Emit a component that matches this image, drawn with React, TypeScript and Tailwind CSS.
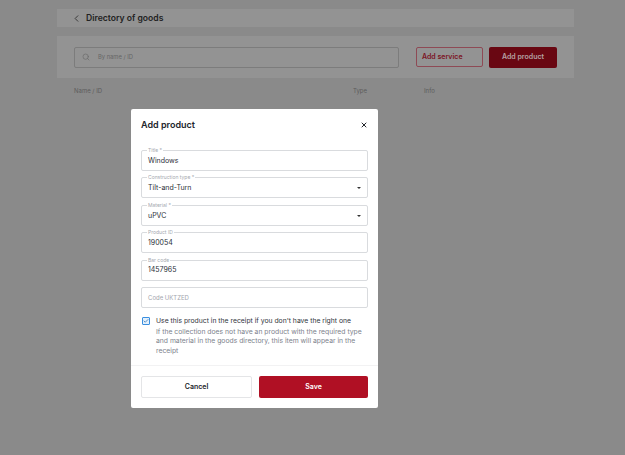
import { ChevronLeft, Search, X, Check } from "lucide-react";

const fields = [
  { label: "Title *", value: "Windows" },
  { label: "Construction type *", value: "Tilt-and-Turn", select: true },
  { label: "Material *", value: "uPVC", select: true },
  { label: "Product ID", value: "190054" },
  { label: "Bar code", value: "1457965" },
];

function Field({ label, value, select }: { label: string; value: string; select?: boolean }) {
  return (
    <div className="relative flex h-[21px] items-center justify-between rounded-[2px] border border-[#d9dbde] pl-[6px] pr-[6px] pt-[1px]">
      <span className="absolute -top-[4px] left-[5px] bg-white px-[1px] text-[5px] leading-[6px] text-[#a5a9b0]">
        {label}
      </span>
      <span className="text-[7px] text-[#2b2f38]">{value}</span>
      {select && <span className="h-0 w-0 border-x-[2px] border-t-[2.5px] border-x-transparent border-t-[#333]" />}
    </div>
  );
}

export default function App() {
  return (
    <div className="relative h-[455px] w-[625px] overflow-hidden bg-[#8a8a8a] font-['Inter','Liberation_Sans',sans-serif]">
      <div className="ml-[57px] flex w-[517px] flex-col pt-[9px]">
        <div className="flex h-[18px] items-center gap-[4px] bg-[#939393] pl-[14px] text-[8.6px] font-semibold text-[#222]">
          <ChevronLeft size={11} strokeWidth={2} className="text-[#333]" />
          Directory of goods
        </div>
        <div className="mt-[9px] flex h-[42px] items-center bg-[#939393] pl-[17px] pr-[17px]">
          <div className="flex h-[21px] w-[325px] items-center gap-[8px] rounded-[2px] border border-[#7c7c7c] pl-[7px]">
            <Search size={8} className="text-[#6a6a6a]" />
            <span className="text-[5.8px] text-[#666]">By name / ID</span>
          </div>
          <div className="ml-[17px] flex h-[20px] w-[67px] items-center rounded-[2px] border border-[#8e4a55] pl-[5px] text-[7px] font-semibold text-[#7c1424]">
            Add service
          </div>
          <div className="ml-[6px] flex h-[21px] w-[68px] items-center justify-center rounded-[2px] bg-[#690712] text-[7px] font-semibold text-[#b5a2a4]">
            Add product
          </div>
        </div>
        <div className="mt-[8px] flex pl-[17px] text-[6px] text-[#5c5c5c]">
          <span className="w-[279px]">Name / ID</span>
          <span className="w-[71px]">Type</span>
          <span>Info</span>
        </div>
      </div>

      <div className="absolute left-[131px] top-[109px] flex h-[299px] w-[247px] flex-col rounded-[2px] bg-white">
        <div className="flex items-center justify-between pl-[10px] pr-[10px] pt-[9px]">
          <span className="text-[9px] font-semibold leading-[13px] text-[#22252b]">Add product</span>
          <X size={8} strokeWidth={3} className="text-[#22252b]" />
        </div>
        <div className="mt-[19px] flex flex-col gap-[6.4px] px-[10px]">
          {fields.map((f) => (
            <Field key={f.label} label={f.label} value={f.value} select={f.select} />
          ))}
          <div className="flex h-[21px] items-center rounded-[2px] border border-[#d9dbde] pl-[6px] text-[6px] text-[#a3a6ad]">
            Code UKTZED
          </div>
        </div>
        <div className="mt-[8px] flex gap-[6px] px-[11px]">
          <span className="mt-[1px] flex h-[8px] w-[8px] shrink-0 items-center justify-center rounded-[1px] border border-[#3a8fe0] bg-[#e4f1fc]">
            <Check size={6} strokeWidth={3} className="text-[#2a6fb5]" />
          </span>
          <div className="flex w-[208px] flex-col">
            <span className="text-[6.8px] leading-[10px] text-[#30343c]">
              Use this product in the receipt if you don't have the right one
            </span>
            <span className="mt-[1px] text-[6.8px] leading-[9.5px] text-[#7d828c]">
              If the collection does not have an product with the required type and material in the goods directory, this item will appear in the receipt
            </span>
          </div>
        </div>
        <div className="mt-[10px] border-t border-[#f2f2f3]" />
        <div className="mt-[10px] flex gap-[7px] px-[10px]">
          <div className="flex h-[22px] flex-1 items-center justify-center rounded-[2px] border border-[#e4e5e7] text-[7px] font-semibold text-[#22252b]">
            Cancel
          </div>
          <div className="flex h-[22px] flex-1 items-center justify-center rounded-[2px] bg-[#b01024] text-[7px] font-semibold text-white">
            Save
          </div>
        </div>
      </div>
    </div>
  );
}
